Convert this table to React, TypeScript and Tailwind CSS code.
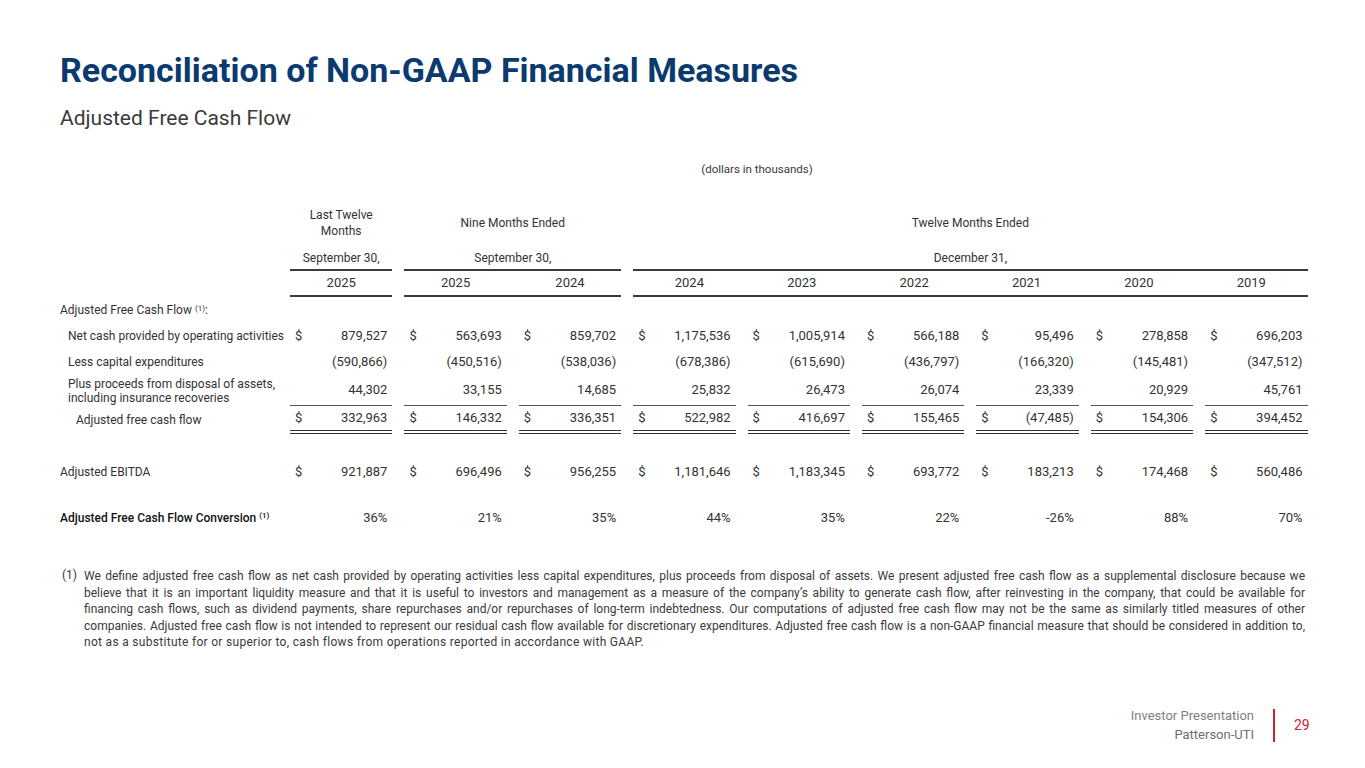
import React from 'react';

const FONT = "font-['Roboto','Liberation_Sans',sans-serif]";

const columns = {
  net: ['879,527', '563,693', '859,702', '1,175,536', '1,005,914', '566,188', '95,496', '278,858', '696,203'],
  capex: ['(590,866)', '(450,516)', '(538,036)', '(678,386)', '(615,690)', '(436,797)', '(166,320)', '(145,481)', '(347,512)'],
  proceeds: ['44,302', '33,155', '14,685', '25,832', '26,473', '26,074', '23,339', '20,929', '45,761'],
  afcf: ['332,963', '146,332', '336,351', '522,982', '416,697', '155,465', '(47,485)', '154,306', '394,452'],
  ebitda: ['921,887', '696,496', '956,255', '1,181,646', '1,183,345', '693,772', '183,213', '174,468', '560,486'],
  conv: ['36%', '21%', '35%', '44%', '35%', '22%', '-26%', '88%', '70%'],
};

const years = ['2025', '2025', '2024', '2024', '2023', '2022', '2021', '2020', '2019'];

const footnote = [
  'We define adjusted free cash flow as net cash provided by operating activities less capital expenditures, plus proceeds from disposal of assets. We present adjusted free cash flow as a supplemental disclosure because we',
  'believe that it is an important liquidity measure and that it is useful to investors and management as a measure of the company’s ability to generate cash flow, after reinvesting in the company, that could be available for',
  'financing cash flows, such as dividend payments, share repurchases and/or repurchases of long-term indebtedness. Our computations of adjusted free cash flow may not be the same as similarly titled measures of other',
  'companies. Adjusted free cash flow is not intended to represent our residual cash flow available for discretionary expenditures. Adjusted free cash flow is a non-GAAP financial measure that should be considered in addition to,',
];

const grid = 'grid grid-cols-[224px_repeat(9,114.4px)]';

const Cell = ({ value, dollar, className = '' }: { value: string; dollar?: boolean; className?: string }) => (
  <div className={`mx-[6px] flex h-full items-center justify-between px-[5px] text-[13px] ${className}`}>
    <span>{dollar ? '$' : ''}</span>
    <span>{value}</span>
  </div>
);

const DataRow = ({
  label,
  values,
  dollar,
  height,
  labelClass = '',
  cellClass = '',
}: {
  label: React.ReactNode;
  values: string[];
  dollar?: boolean;
  height: string;
  labelClass?: string;
  cellClass?: string;
}) => (
  <div className={`${grid} ${height}`}>
    <div className={`flex items-center text-[12px] ${labelClass}`}>{label}</div>
    {values.map((v, i) => (
      <Cell key={i} value={v} dollar={dollar} className={cellClass} />
    ))}
  </div>
);

export default function App() {
  return (
    <div className={`relative h-[768px] w-[1365px] overflow-hidden bg-white text-[#333] ${FONT}`}>
      <div className="px-[60px] pt-[50px]">
        <h1 className="text-[34px] leading-[40px] font-bold text-[#0b3a6e]">
          Reconciliation of Non-GAAP Financial Measures
        </h1>
        <h2 className="mt-[15px] text-[21px] leading-[26px] text-[#3a3a3a]">Adjusted Free Cash Flow</h2>

        <div className="mt-[31px] ml-[70px] w-[1254px] text-center text-[11.5px] leading-[14px] text-[#3a3a3a]">
          (dollars in thousands)
        </div>

        {/* table */}
        <div className="mt-[24px] text-[12px]">
          <div className={`${grid} h-[46px] leading-[16px]`}>
            <div />
            <div className="flex items-center justify-center text-center">
              Last Twelve
              <br />
              Months
            </div>
            <div className="col-span-2 flex items-center justify-center">Nine Months Ended</div>
            <div className="col-span-6 flex items-center justify-center">Twelve Months Ended</div>
          </div>

          <div className={`${grid} h-[25px]`}>
            <div />
            <div className="mx-[6px] flex items-center justify-center border-b-2 border-[#3a3a3a]">September 30,</div>
            <div className="col-span-2 mx-[6px] flex items-center justify-center border-b-2 border-[#3a3a3a]">September 30,</div>
            <div className="col-span-6 mx-[6px] flex items-center justify-center border-b-2 border-[#3a3a3a]">December 31,</div>
          </div>

          <div className={`${grid} h-[26px] text-[13px]`}>
            <div />
            <div className="mx-[6px] flex items-center justify-center border-b-2 border-[#3a3a3a]">{years[0]}</div>
            <div className="col-span-2 mx-[6px] grid grid-cols-2 border-b-2 border-[#3a3a3a]">
              <div className="flex items-center justify-center pr-[6px]">{years[1]}</div>
              <div className="flex items-center justify-center pl-[6px]">{years[2]}</div>
            </div>
            <div className="col-span-6 mx-[6px] grid grid-cols-6 border-b-2 border-[#3a3a3a]">
              {years.slice(3).map((y, i) => (
                <div key={i} className="flex items-center justify-center">
                  {y}
                </div>
              ))}
            </div>
          </div>

          <div className={`${grid} h-[26px]`}>
            <div className="flex items-center whitespace-nowrap">
              Adjusted Free Cash Flow&nbsp;<sup className="relative top-[-1px] text-[8px]">(1)</sup>:
            </div>
          </div>

          <DataRow label="Net cash provided by operating activities" values={columns.net} dollar height="h-[26px]" labelClass="pl-[8px] whitespace-nowrap" />
          <DataRow label="Less capital expenditures" values={columns.capex} height="h-[26px]" labelClass="pl-[8px]" />
          <DataRow
            label={
              <span className="leading-[14px] whitespace-nowrap">
                Plus proceeds from disposal of assets,
                <br />
                including insurance recoveries
              </span>
            }
            values={columns.proceeds}
            height="h-[31px]"
            labelClass="pl-[8px]"
            cellClass="border-b border-[#555]"
          />
          <DataRow
            label="Adjusted free cash flow"
            values={columns.afcf}
            dollar
            height="h-[28px]"
            labelClass="pl-[16px]"
            cellClass="border-b-4 border-double border-[#333]"
          />

          <div className="h-[25px]" />
          <DataRow label="Adjusted EBITDA" values={columns.ebitda} dollar height="h-[26px]" />
          <div className="h-[20px]" />
          <DataRow
            label={
              <span className="font-medium text-[#111]">
                Adjusted Free Cash Flow Conversion <sup className="text-[8px]">(1)</sup>
              </span>
            }
            values={columns.conv}
            height="h-[26px]"
            labelClass="text-[11.5px] whitespace-nowrap"
          />
        </div>

        {/* footnote */}
        <div className="mt-[37px] flex text-[12px] leading-[16.6px] text-[#3a3a3a]">
          <div className="w-[24px] shrink-0 pl-[2px] text-[12px] leading-[14px]">(1)</div>
          <div className="w-[1223px]">
            {footnote.map((line, i) => (
              <div key={i} className="text-justify whitespace-nowrap [text-align-last:justify]">
                {line}
              </div>
            ))}
            <div className="tracking-[0.3px]">
              not as a substitute for or superior to, cash flows from operations reported in accordance with GAAP.
            </div>
          </div>
        </div>
      </div>

      {/* footer */}
      <div className="absolute top-[706px] right-[55px] flex items-center">
        <div className="text-right text-[13px] leading-[19px] text-[#808080]">
          <div>Investor Presentation</div>
          <div className="text-[#6e6e6e]">Patterson-UTI</div>
        </div>
        <div className="mx-[19px] h-[33px] w-[2px] bg-[#d3202f]" />
        <div className="w-[16px] text-[14px] text-[#d3202f]">29</div>
      </div>
    </div>
  );
}
